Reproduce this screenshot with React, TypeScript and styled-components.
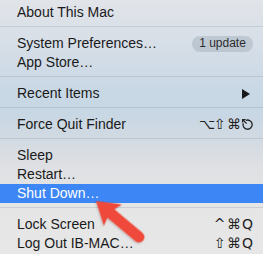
import React from 'react';
import styled, { createGlobalStyle } from 'styled-components';

const GlobalStyle = createGlobalStyle`
  html, body {
    margin: 0;
    padding: 0;
    background: #e6e6e6;
  }
  body {
    font-family: 'Liberation Sans', Arial, sans-serif;
  }
`;

const Menu = styled.div`
  position: relative;
  width: 263px;
  height: 254px;
  overflow: hidden;
  padding-top: 3px;
  box-sizing: border-box;
  background: linear-gradient(
    180deg,
    #e1e4e9 0%,
    #d6dee7 18%,
    #c9d8e5 35%,
    #c8d7e4 45%,
    #d2dae2 55%,
    #dfe0e3 66%,
    #e5e5e5 80%,
    #e7e7e7 100%
  );
  font-size: 14px;
  color: #1a1a1a;
`;

const Item = styled.div<{ $active?: boolean }>`
  display: flex;
  align-items: center;
  justify-content: space-between;
  height: 19px;
  line-height: 19px;
  padding: 0 9px 0 17px;
  background: ${(p) => (p.$active ? '#3d86f5' : 'transparent')};
  color: ${(p) => (p.$active ? '#ffffff' : 'inherit')};
`;

const Separator = styled.div`
  height: 1px;
  margin: 4px 0 7px;
  background: rgba(60, 80, 100, 0.14);
`;

const Badge = styled.span`
  display: inline-flex;
  align-items: center;
  justify-content: center;
  width: 61px;
  height: 16px;
  margin-right: 1px;
  border-radius: 8px;
  background: rgba(90, 110, 130, 0.2);
  font-size: 12px;
  color: #2c2c2c;
`;

const Shortcut = styled.span`
  display: inline-flex;
  align-items: center;
  gap: 1px;
  font-family: 'DejaVu Sans', 'Liberation Sans', sans-serif;
  font-size: 14px;
  color: #222;
`;

const Key = styled.span`
  display: inline-block;
  width: 13px;
  text-align: center;
`;

const Submenu = styled.svg`
  margin-right: 4px;
`;

const Pointer = styled.svg`
  position: absolute;
  left: 0;
  top: 0;
  pointer-events: none;
`;

const EscIcon = () => (
  <svg width="13" height="13" viewBox="0 0 13 13" fill="none" stroke="#222" strokeWidth="1.3">
    <path d="M5 2.3 A4.6 4.6 0 1 1 2.2 5.2" />
    <path d="M1.8 1.8 L5.6 5.6" />
    <path d="M1.6 4.6 V1.6 H4.6" />
  </svg>
);

const App = () => {
  return (
    <>
      <GlobalStyle />
      <Menu>
        <Item>About This Mac</Item>
        <Separator />
        <Item>
          System Preferences…<Badge>1 update</Badge>
        </Item>
        <Item>App Store…</Item>
        <Separator />
        <Item>
          Recent Items
          <Submenu width="8" height="10" viewBox="0 0 8 10">
            <path d="M0 0 L8 5 L0 10 Z" fill="#1a1a1a" />
          </Submenu>
        </Item>
        <Separator />
        <Item>
          Force Quit Finder
          <Shortcut>
            <Key>⌥</Key>
            <Key>⇧</Key>
            <Key>⌘</Key>
            <EscIcon />
          </Shortcut>
        </Item>
        <Separator />
        <Item>Sleep</Item>
        <Item>Restart…</Item>
        <Item $active>Shut Down…</Item>
        <Separator />
        <Item>
          Lock Screen
          <Shortcut>
            <Key>^</Key>
            <Key>⌘</Key>
            <Key>Q</Key>
          </Shortcut>
        </Item>
        <Item>
          Log Out IB-MAC…
          <Shortcut>
            <Key>⇧</Key>
            <Key>⌘</Key>
            <Key>Q</Key>
          </Shortcut>
        </Item>
        <Pointer width="263" height="254" viewBox="0 0 263 254">
          <defs>
            <filter id="shadow" x="-20%" y="-20%" width="140%" height="140%">
              <feDropShadow dx="0" dy="1" stdDeviation="1" floodColor="#000" floodOpacity="0.25" />
            </filter>
          </defs>
          <g transform="translate(96 201) rotate(40)" filter="url(#shadow)" fill="#ef4a3b">
            <path d="M0 0 L22 -14 L19.5 -5.5 L56 -5.5 A5.5 5.5 0 0 1 56 5.5 L19.5 5.5 L22 14 Z" />
          </g>
        </Pointer>
      </Menu>
    </>
  );
};

export default App;
